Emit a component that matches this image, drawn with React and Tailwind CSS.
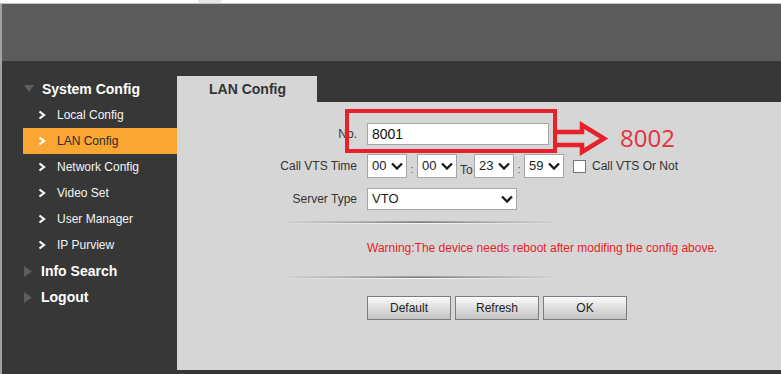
import React from "react";

const font = { fontFamily: '"Liberation Sans", Arial, sans-serif' };

function Chevron({ color = "#ffffff" }) {
  return (
    <svg width="8" height="10" viewBox="0 0 8 10" className="shrink-0">
      <polyline points="1.5,1.5 6,5 1.5,8.5" fill="none" stroke={color} strokeWidth="2.2" />
    </svg>
  );
}

function TriDown() {
  return (
    <svg width="10" height="8" viewBox="0 0 10 8" className="shrink-0">
      <polygon points="0,0 10,0 5,7" fill="#5e5e5e" />
    </svg>
  );
}

function TriRight() {
  return (
    <svg width="9" height="11" viewBox="0 0 9 11" className="shrink-0">
      <polygon points="0,0 8,5.5 0,11" fill="#5e5e5e" />
    </svg>
  );
}

function SelChevron() {
  return (
    <svg width="12" height="8" viewBox="0 0 12 8" className="shrink-0">
      <polyline points="1,1.5 6,6.5 11,1.5" fill="none" stroke="#1a1a1a" strokeWidth="2.3" />
    </svg>
  );
}

function Select({ value, w = "w-[40px]", h = "h-[24px]" }) {
  return (
    <div className={`${w} ${h} bg-white border border-[#a6a6a6] flex items-center justify-between pl-[4px] pr-[3px] text-[13px] text-[#222]`}>
      <span>{value}</span>
      <SelChevron />
    </div>
  );
}

function Colon() {
  return <span className="w-[10px] text-center text-[11px] text-[#555] self-end leading-none pb-[3px]">:</span>;
}

function Btn({ children }) {
  return (
    <div className="w-[84px] h-[24px] flex items-center justify-center border border-[#7c7c7c] bg-gradient-to-b from-[#fbfbfb] to-[#c2c2c2] text-[12px] text-[#222]">
      {children}
    </div>
  );
}

function Sep() {
  return (
    <div className="ml-[103px] w-[280px] flex flex-col">
      <div className="h-[1px] bg-gradient-to-r from-transparent via-[#9a9a9a] to-transparent" />
      <div className="h-[1px] bg-gradient-to-r from-transparent via-[#7c7c7c] to-transparent" />
      <div className="h-[1px] bg-gradient-to-r from-transparent via-[#f6f6f6] to-transparent" />
    </div>
  );
}

export default function App() {
  const items = ["Local Config", "LAN Config", "Network Config", "Video Set", "User Manager", "IP Purview"];
  return (
    <div className="w-[781px] h-[374px] overflow-hidden flex flex-col bg-white" style={font}>
      <div className="h-[4px] flex border-b border-[#c4c4c4] bg-white">
        <div className="ml-[198px] w-[23px] h-[3px] bg-[#e6e6e6]" />
      </div>
      <div className="flex-1 flex flex-col border-l-2 border-[#a2a2a2]">
        <div className="h-[57px] bg-[#5c5c5c]" />
        <div className="flex-1 flex bg-[#373737]">
          {/* Sidebar */}
          <div className="w-[175px] pt-[15px] flex flex-col">
            <div className="h-[26px] flex items-center pl-[22px]">
              <TriDown />
              <span className="ml-[8px] text-[14px] font-bold text-white">System Config</span>
            </div>
            {items.map((t) => {
              const active = t === "LAN Config";
              return (
                <div
                  key={t}
                  className={`h-[26px] flex items-center ml-[21px] pl-[15px] ${active ? "bg-[#f9a633]" : ""}`}
                >
                  <Chevron />
                  <span className={`ml-[11px] text-[12px] ${active ? "text-[#2a2a2a]" : "text-[#f4f4f4]"}`}>{t}</span>
                </div>
              );
            })}
            <div className="h-[26px] flex items-center pl-[22px]">
              <TriRight />
              <span className="ml-[8px] text-[14px] font-bold text-white">Info Search</span>
            </div>
            <div className="h-[26px] flex items-center pl-[22px]">
              <TriRight />
              <span className="ml-[8px] text-[14px] font-bold text-white">Logout</span>
            </div>
          </div>

          {/* Main */}
          <div className="flex-1 flex flex-col pt-[15px] pb-[4px]">
            <div className="w-[140px] h-[26px] bg-[#d6d6d6] flex items-center pl-[32px] text-[14px] font-bold text-[#333]">
              LAN Config
            </div>
            <div className="flex-1 bg-[#d6d6d6] relative flex flex-col text-[12px] text-[#333]">
              <div className="mt-[21px] h-[22px] flex items-center">
                <span className="w-[180px] text-right">No.</span>
                <div className="ml-[10px] w-[182px] h-[22px] bg-white border border-[#a6a6a6] flex items-center pl-[4px] text-[14px] text-[#111]">
                  8001
                </div>
              </div>
              <div className="mt-[9px] h-[24px] flex items-center">
                <span className="w-[180px] text-right">Call VTS Time</span>
                <div className="ml-[10px] flex h-[24px]">
                  <Select value="00" />
                  <Colon />
                  <Select value="00" />
                  <span className="ml-[3px] w-[14px] self-end leading-none pb-[2px] text-[12px]">To</span>
                  <Select value="23" />
                  <Colon />
                  <Select value="59" />
                </div>
                <div className="ml-[9px] w-[13px] h-[13px] bg-white border border-[#767676]" />
                <span className="ml-[6px]">Call VTS Or Not</span>
              </div>
              <div className="mt-[10px] h-[22px] flex items-center">
                <span className="w-[180px] text-right">Server Type</span>
                <div className="ml-[10px]">
                  <Select value="VTO" w="w-[150px]" h="h-[22px]" />
                </div>
              </div>
              <div className="mt-[11px]">
                <Sep />
              </div>
              <div className="mt-[17px] h-[14px] leading-[14px] pl-[190px] text-[#ea1c24]">
                Warning:The device needs reboot after modifing the config above.
              </div>
              <div className="mt-[21px]">
                <Sep />
              </div>
              <div className="mt-[17px] pl-[190px] flex gap-[4px]">
                <Btn>Default</Btn>
                <Btn>Refresh</Btn>
                <Btn>OK</Btn>
              </div>

              {/* annotation overlay */}
              <div className="absolute left-[168px] top-[7px] w-[212px] h-[44px] border-[4px] border-[#e8202a]" />
              <svg className="absolute left-[378px] top-[16px]" width="56" height="38" viewBox="0 0 56 38">
                <polyline
                  points="0,14 27,14 27,7 49,20.5 27,34 27,27 0,27"
                  fill="none"
                  stroke="#e8202a"
                  strokeWidth="4.5"
                  strokeLinejoin="miter"
                />
              </svg>
              <div
                className="absolute left-[443px] top-[24px] text-[24px] leading-none text-[#e5323a]"
                style={{ fontFamily: '"Open Sans", "Noto Sans", sans-serif' }}
              >
                8002
              </div>
            </div>
          </div>
        </div>
      </div>
    </div>
  );
}
